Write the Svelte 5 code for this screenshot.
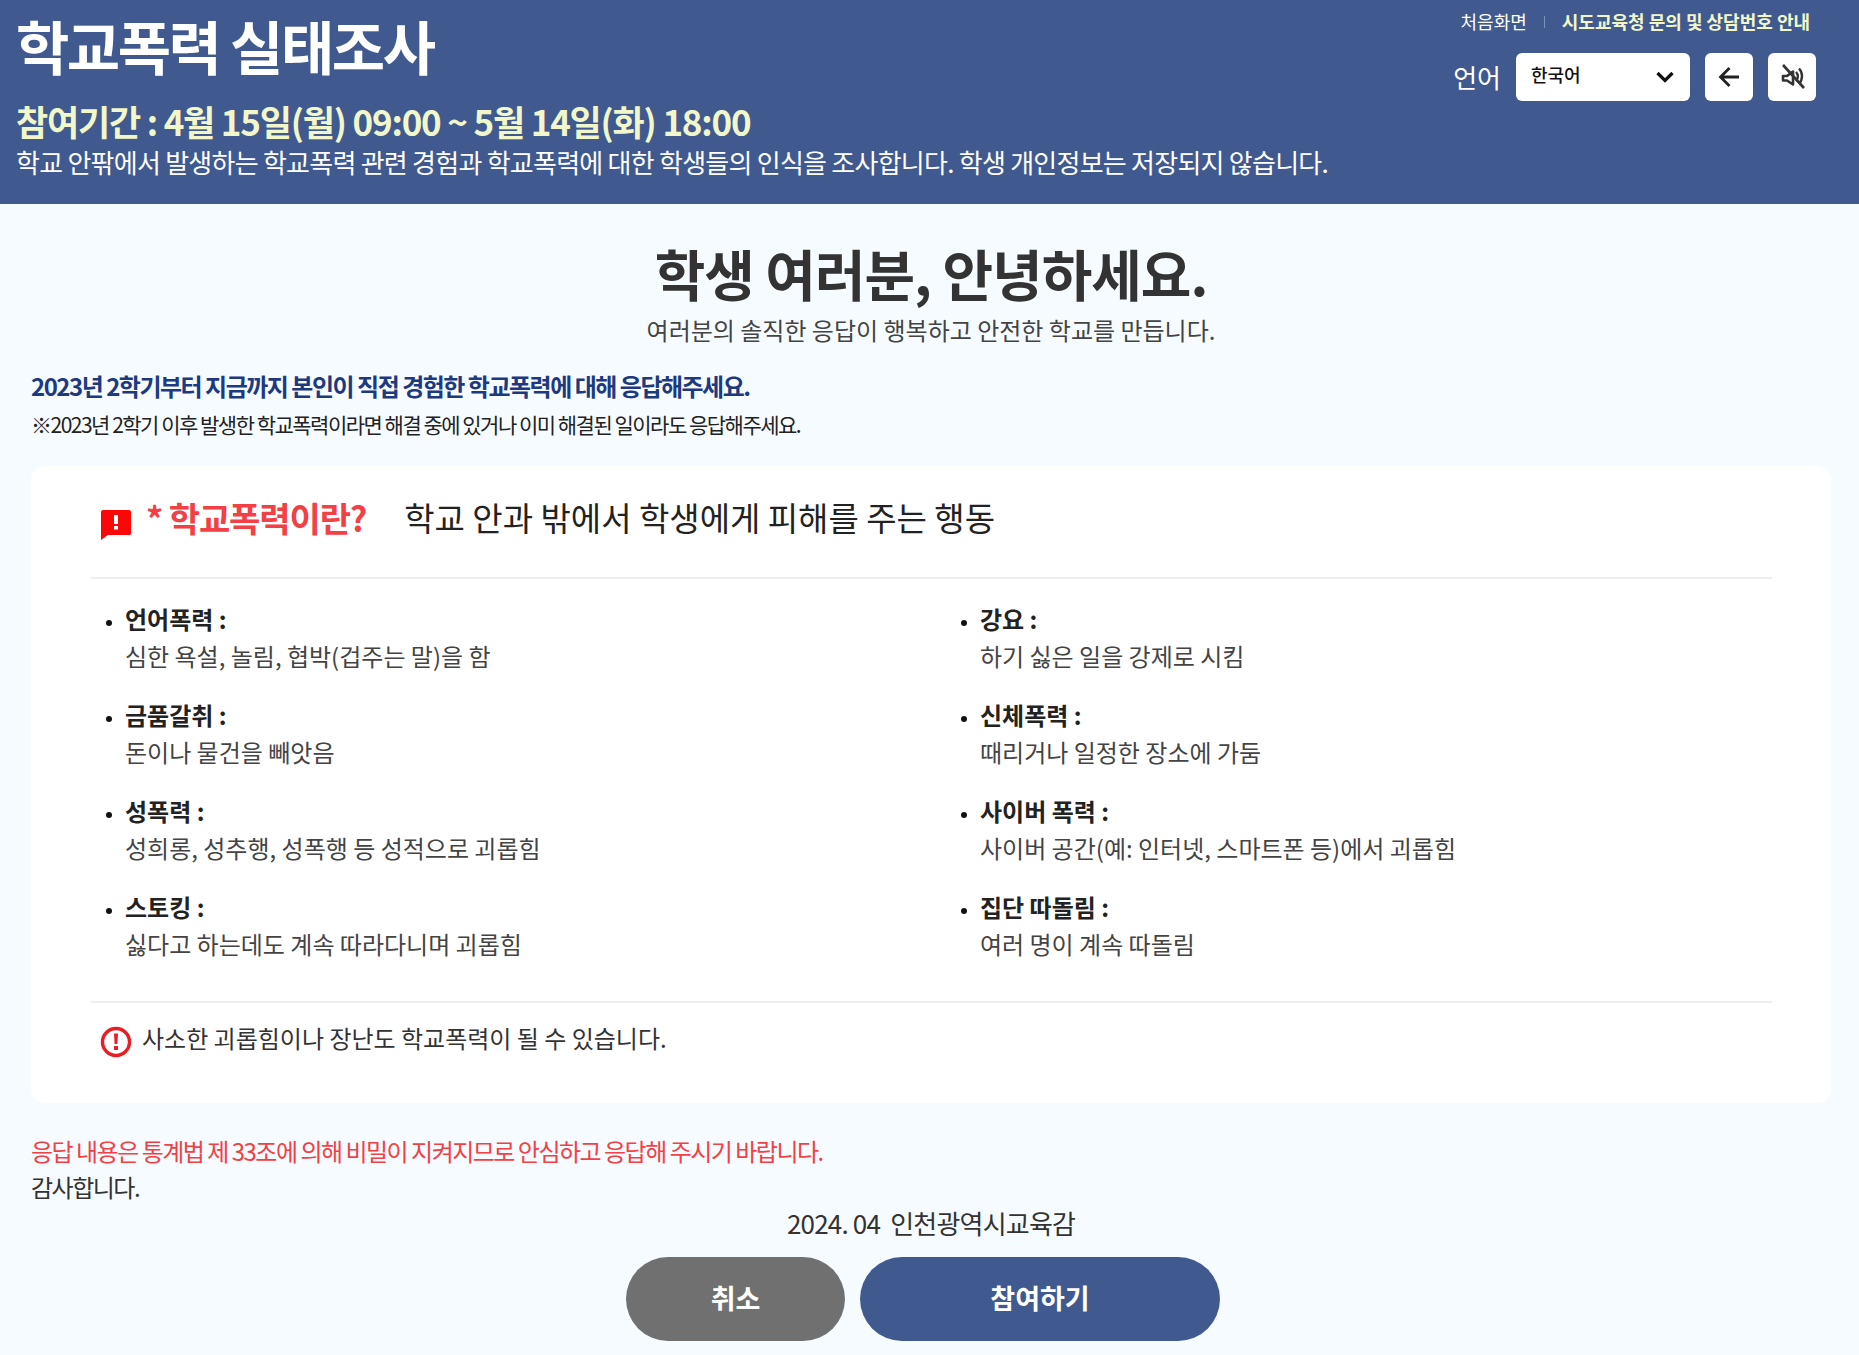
<script lang="ts">
const leftItems = [
    { title: "언어폭력 :", desc: "심한 욕설, 놀림, 협박(겁주는 말)을 함" },
    { title: "금품갈취 :", desc: "돈이나 물건을 빼앗음" },
    { title: "성폭력 :", desc: "성희롱, 성추행, 성폭행 등 성적으로 괴롭힘" },
    { title: "스토킹 :", desc: "싫다고 하는데도 계속 따라다니며 괴롭힘" },
];
const rightItems = [
    { title: "강요 :", desc: "하기 싫은 일을 강제로 시킴" },
    { title: "신체폭력 :", desc: "때리거나 일정한 장소에 가둠" },
    { title: "사이버 폭력 :", desc: "사이버 공간(예: 인터넷, 스마트폰 등)에서 괴롭힘" },
    { title: "집단 따돌림 :", desc: "여러 명이 계속 따돌림" },
];
</script>

<div class="page">
    <header class="top">
        <div class="intro">
            <h1>학교폭력 실태조사</h1>
            <p class="period">참여기간 : 4월 15일(월) 09:00 ~ 5월 14일(화) 18:00</p>
            <p class="lead">학교 안팎에서 발생하는 학교폭력 관련 경험과 학교폭력에 대한 학생들의 인식을 조사합니다. 학생 개인정보는 저장되지 않습니다.</p>
        </div>
        <div class="tools">
            <nav class="links">
                <span class="home">처음화면</span>
                <span class="sep"></span>
                <span class="contact">시도교육청 문의 및 상담번호 안내</span>
            </nav>
            <div class="controls">
                <span class="lang-label">언어</span>
                <div class="select">
                    <span>한국어</span>
                    <svg width="20" height="12" viewBox="0 0 20 12"><path d="M2.500 2l7.500 7.500L17.500 2" fill="none" stroke="#111" stroke-width="3.200" /></svg>
                </div>
                <button class="icon-btn" aria-label="뒤로">
                    <svg width="24" height="24" viewBox="0 0 24 24"><path d="M22 12H4M12.500 3l-9 9 9 9" fill="none" stroke="#222" stroke-width="2.800" /></svg>
                </button>
                <button class="icon-btn" aria-label="음소거">
                    <svg width="28" height="28" viewBox="0 0 28 28">
                        <path d="M5 13h4l6-4.500v13L9 17.500H5z" fill="none" stroke="#333" stroke-width="2.600" stroke-linejoin="round" />
                        <path d="M18 9c2.500 2.500 2.500 6.500 0 9M21 5.500c4 4 4 11 0 15.500" fill="none" stroke="#333" stroke-width="2.400" />
                        <path d="M5 2l21 23" stroke="#333" stroke-width="2.600" />
                    </svg>
                </button>
            </div>
        </div>
    </header>

    <main class="content">
        <section class="greeting">
            <h2>학생 여러분, 안녕하세요.</h2>
            <p>여러분의 솔직한 응답이 행복하고 안전한 학교를 만듭니다.</p>
        </section>

        <p class="notice">2023년 2학기부터 지금까지 본인이 직접 경험한 학교폭력에 대해 응답해주세요.</p>
        <p class="subnotice">※2023년 2학기 이후 발생한 학교폭력이라면 해결 중에 있거나 이미 해결된 일이라도 응답해주세요.</p>

        <section class="card">
            <div class="card-head">
                <svg class="bubble" width="30" height="30" viewBox="0 0 30 30">
                    <path d="M0 2Q0 0 2 0h26Q30 0 30 2v22Q30 25 28 25H7l-7 5z" fill="#fb0707" />
                    <path d="M13 5h4v9h-4zM13 16h4v3.500h-4z" fill="#fff" />
                </svg>
                <strong>* 학교폭력이란?</strong>
                <span>학교 안과 밖에서 학생에게 피해를 주는 행동</span>
            </div>
            <div class="lists">
                <ul>
                    {#each leftItems as item}
                        <li><b>{item.title}</b><span>{item.desc}</span></li>
                    {/each}
                </ul>
                <ul>
                    {#each rightItems as item}
                        <li><b>{item.title}</b><span>{item.desc}</span></li>
                    {/each}
                </ul>
            </div>
            <div class="card-foot">
                <svg width="32" height="32" viewBox="0 0 32 32">
                    <circle cx="16" cy="16" r="13.500" fill="none" stroke="#ea1c24" stroke-width="3.400" />
                    <path d="M14 7.500h4l-.6 10.500h-2.800zM14 20h4v4h-4z" fill="#ea1c24" />
                </svg>
                <span>사소한 괴롭힘이나 장난도 학교폭력이 될 수 있습니다.</span>
            </div>
        </section>

        <p class="secret">응답 내용은 통계법 제 33조에 의해 비밀이 지켜지므로 안심하고 응답해 주시기 바랍니다.</p>
        <p class="thanks">감사합니다.</p>
        <p class="sign">2024. 04 &nbsp;인천광역시교육감</p>
        <div class="actions">
            <button class="cancel">취소</button>
            <button class="join">참여하기</button>
        </div>
    </main>
</div>

<style>
    :global(body) {
        margin: 0;
        background: #f6fbff;
    }

    .page {
        font-family: "Noto Sans CJK KR", "Noto Sans", sans-serif;
        color: #333;
        height: 1355px;
        overflow: hidden;
    }

    h1, h2, p, ul {
        margin: 0;
        padding: 0;
    }

    .top {
        height: 204px;
        box-sizing: border-box;
        background: #405a8f;
        padding: 0 43px 0 16px;
        display: flex;
        justify-content: space-between;
        color: #fff;
    }

    h1 {
        font-size: 58px;
        font-weight: 700;
        line-height: 90px;
        letter-spacing: -2.500px;
    }

    .period {
        font-size: 35px;
        font-weight: 700;
        line-height: 48px;
        letter-spacing: -1.200px;
        color: #f1f7c9;
        margin-top: 7px;
    }

    .lead {
        font-size: 26px;
        line-height: 36px;
        letter-spacing: -0.750px;
        margin-top: -1px;
    }

    .tools {
        display: flex;
        flex-direction: column;
        align-items: flex-end;
    }

    .links {
        display: flex;
        align-items: center;
        font-size: 18px;
        line-height: 25px;
        margin-top: 9px;
        padding-right: 6px;
    }

    .sep {
        width: 1px;
        height: 12px;
        background: #7f92b8;
        margin: 0 17px;
    }

    .contact {
        font-weight: 700;
        color: #f1f7c9;
    }

    .controls {
        display: flex;
        align-items: center;
        margin-top: 19px;
    }

    .lang-label {
        font-size: 26px;
        margin: -2px 15px 0 0;
    }

    .select {
        width: 174px;
        height: 48px;
        box-sizing: border-box;
        background: #fff;
        border-radius: 6px;
        color: #111;
        font-size: 18px;
        font-weight: 500;
        padding: 0 15px 0 15px;
        display: flex;
        align-items: center;
        justify-content: space-between;
        margin-right: 15px;
    }

    .select span {
        margin-top: -6px;
    }

    .icon-btn {
        width: 48px;
        height: 48px;
        background: #fff;
        border: 0;
        border-radius: 6px;
        padding: 0;
        display: flex;
        align-items: center;
        justify-content: center;
    }

    .icon-btn + .icon-btn {
        margin-left: 15px;
    }

    .content {
        padding: 0 28px 0 31px;
    }

    .greeting {
        text-align: center;
        margin-top: 28px;
    }

    h2 {
        font-size: 55px;
        font-weight: 700;
        line-height: 80px;
        letter-spacing: -1px;
        color: #333;
    }

    .greeting p {
        font-size: 24px;
        line-height: 36px;
        color: #444;
    }

    .notice {
        font-size: 24px;
        font-weight: 700;
        line-height: 36px;
        letter-spacing: -1.500px;
        color: #1d3a80;
        margin-top: 20px;
    }

    .subnotice {
        font-size: 21px;
        line-height: 32px;
        letter-spacing: -1.500px;
        color: #222;
        margin-top: 4px;
    }

    .card {
        background: #fff;
        border-radius: 14px;
        margin-top: 26px;
        height: 637px;
        box-sizing: border-box;
        padding: 0 59px 0 60px;
    }

    .card-head {
        display: flex;
        align-items: center;
        height: 113px;
        border-bottom: 2px solid #eceef0;
        padding-left: 10px;
        box-sizing: border-box;
    }

    .card-head svg {
        margin-right: 15px;
        margin-top: 6px;
    }

    .card-head strong {
        font-size: 34px;
        font-weight: 700;
        color: #f34045;
        letter-spacing: -1.100px;
        margin: 0 38px 9px 0;
    }

    .card-head span {
        font-size: 33px;
        color: #222;
        margin-bottom: 9px;
    }

    .lists {
        display: grid;
        grid-template-columns: 855px 1fr;
        height: 424px;
        padding-top: 23px;
        box-sizing: border-box;
        border-bottom: 2px solid #eceef0;
    }

    ul {
        list-style: none;
    }

    li {
        display: flow-root;
        position: relative;
        padding-left: 34px;
        height: 96px;
        font-size: 24px;
        line-height: 36px;
    }

    li::before {
        content: "";
        position: absolute;
        left: 15px;
        top: 18px;
        width: 6px;
        height: 6px;
        border-radius: 50%;
        background: #111;
    }

    li b {
        display: block;
        font-weight: 700;
        color: #222;
        margin: -1px 0 1px;
    }

    li span {
        display: block;
        color: #444;
    }

    .card-foot {
        display: flex;
        align-items: center;
        padding: 18px 0 0 9px;
        font-size: 24px;
        color: #333;
    }

    .card-foot svg {
        margin-right: 10px;
        margin-top: 5px;
    }

    .card-foot span {
        margin-top: -5px;
    }

    .secret {
        font-size: 24px;
        line-height: 36px;
        letter-spacing: -1.500px;
        color: #f34045;
        margin-top: 30px;
    }

    .thanks {
        font-size: 24px;
        line-height: 36px;
        letter-spacing: -1.500px;
    }

    .sign {
        font-size: 26px;
        line-height: 36px;
        letter-spacing: -0.800px;
        text-align: center;
    }

    .actions {
        display: flex;
        justify-content: center;
        gap: 15px;
        margin-top: 16px;
        padding-right: 16px;
    }

    .actions button {
        height: 84px;
        border: 0;
        border-radius: 42px;
        color: #fff;
        font-family: inherit;
        font-size: 27px;
        font-weight: 700;
        padding-bottom: 5px;
    }

    .cancel {
        width: 219px;
        background: #707070;
    }

    .join {
        width: 360px;
        background: #405a8f;
    }
</style>
